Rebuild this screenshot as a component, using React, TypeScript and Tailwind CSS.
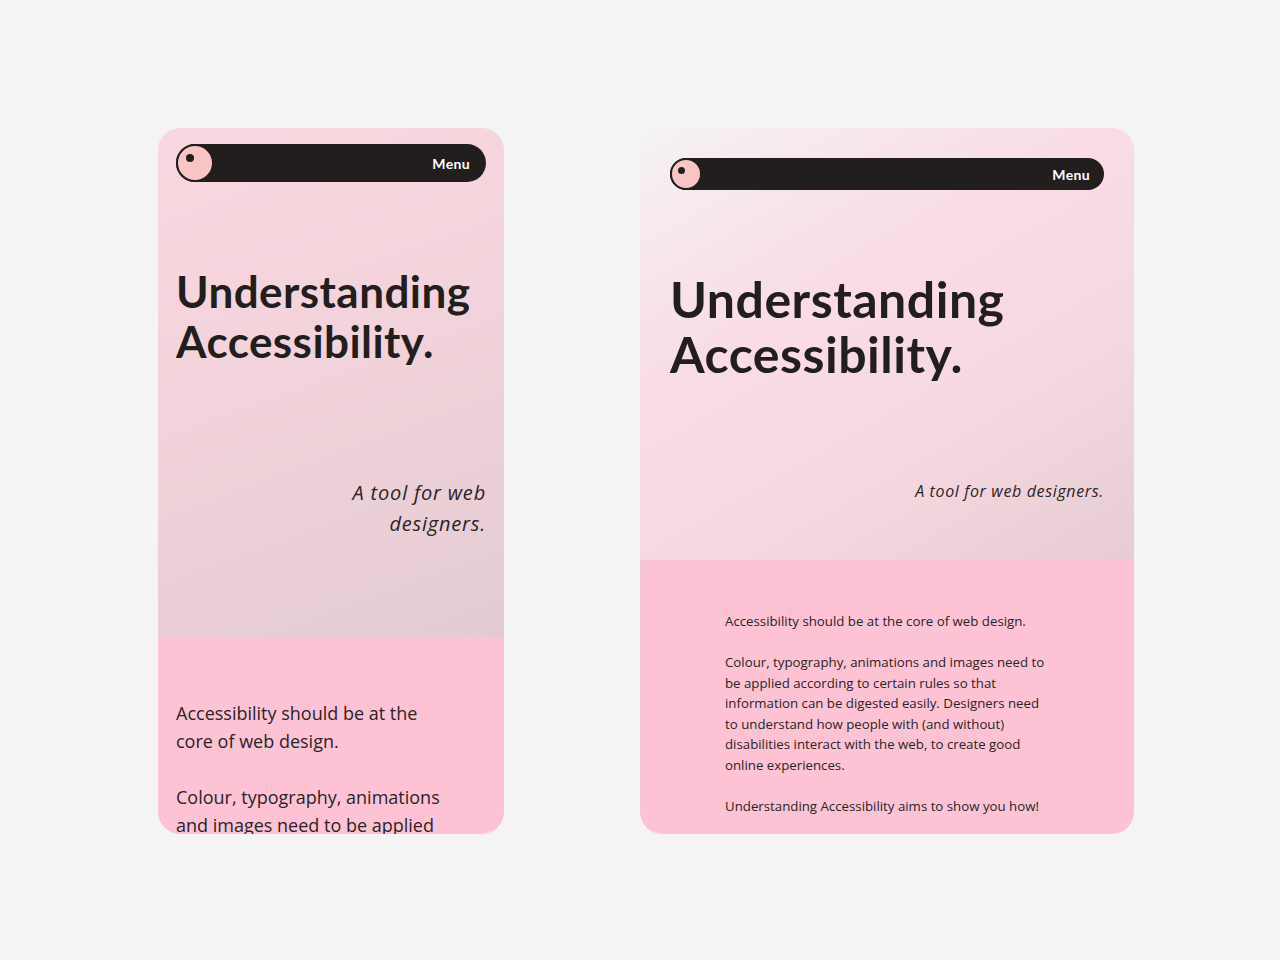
export default function App() {
  return (
    <div className="min-h-screen w-full bg-[#f4f4f4] flex items-start gap-[136px] pl-[158px] pt-[128px]" style={{ fontFamily: "Lato, 'Noto Sans', sans-serif" }}>
      <MobileCard />
      <DesktopCard />
    </div>
  );
}

const body = { fontFamily: "'Open Sans', Lato, sans-serif" };

function Logo({ size, dot }: { size: number; dot: number }) {
  return (
    <div
      className="relative shrink-0 rounded-full bg-[#f8c4c4] border-2 border-[#221e1e]"
      style={{ width: size, height: size }}
    >
      <span
        className="absolute rounded-full bg-[#221e1e]"
        style={{ width: dot, height: dot, left: size * 0.2, top: size * 0.22 }}
      />
    </div>
  );
}

function MobileCard() {
  return (
    <div className="w-[346px] h-[706px] rounded-[22px] overflow-hidden flex flex-col shrink-0">
      <div className="h-[510px] shrink-0 px-[18px] pt-4 flex flex-col bg-[linear-gradient(160deg,#f9d7e0_0%,#f3d3db_45%,#e3cbd2_100%)]">
        <nav className="h-[38px] rounded-full bg-[#221e1e] flex items-center justify-between pr-4">
          <Logo size={38} dot={8} />
          <span className="text-white font-bold text-[14px] tracking-wide">Menu</span>
        </nav>
        <h1 className="mt-[84px] text-[#221e1e] font-bold text-[44px] leading-[50px] tracking-[0.01em]">
          Understanding
          <br />
          Accessibility.
        </h1>
        <p style={body} className="mt-[111px] self-end text-right italic text-[#2a2426] text-[20px] leading-[31px] tracking-[0.04em]">
          A tool for web
          <br />
          designers.
        </p>
      </div>
      <div style={body} className="flex-1 bg-[#fdc3d5] px-[18px] pt-[61px] text-[#2a2426] text-[18px] leading-[28px]">
        <p>
          Accessibility should be at the
          <br />
          core of web design.
        </p>
        <p className="mt-[28px]">
          Colour, typography, animations
          <br />
          and images need to be applied
        </p>
      </div>
    </div>
  );
}

function DesktopCard() {
  return (
    <div className="w-[494px] h-[706px] rounded-[22px] overflow-hidden flex flex-col shrink-0">
      <div className="h-[432px] shrink-0 px-[30px] pt-[30px] flex flex-col bg-[linear-gradient(150deg,#f5f2f3_0%,#f9dce4_38%,#f6d8e0_65%,#e7ccd4_100%)]">
        <nav className="h-[32px] rounded-full bg-[#221e1e] flex items-center justify-between pr-[14px]">
          <Logo size={32} dot={7} />
          <span className="text-white font-bold text-[14px] tracking-wide">Menu</span>
        </nav>
        <h1 className="mt-[82px] text-[#221e1e] font-bold text-[50px] leading-[55px] tracking-[0.01em]">
          Understanding
          <br />
          Accessibility.
        </h1>
        <p style={body} className="mt-[97px] self-end italic text-[#2a2426] text-[16px] leading-[24px] tracking-[0.04em]">
          A tool for web designers.
        </p>
      </div>
      <div style={body} className="flex-1 bg-[#fdc3d5] pl-[85px] pt-[51px] text-[#2a2426] text-[13.25px] leading-[20.5px]">
        <p>Accessibility should be at the core of web design.</p>
        <p className="mt-[20.5px]">
          Colour, typography, animations and images need to
          <br />
          be applied according to certain rules so that
          <br />
          information can be digested easily. Designers need
          <br />
          to understand how people with (and without)
          <br />
          disabilities interact with the web, to create good
          <br />
          online experiences.
        </p>
        <p className="mt-[20.5px]">Understanding Accessibility aims to show you how!</p>
      </div>
    </div>
  );
}
